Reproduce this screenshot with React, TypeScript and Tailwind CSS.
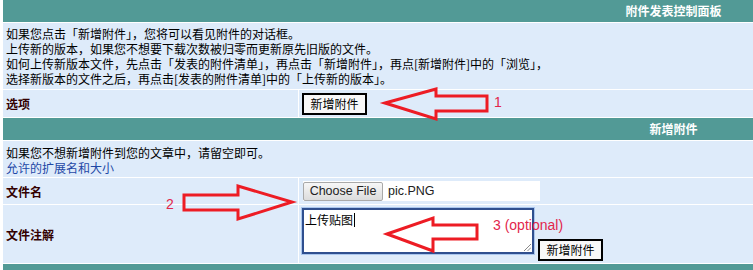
import React from "react";

const TEAL = "bg-[#529a96]";

function AddButton() {
  return (
    <div className="w-[65px] h-[22px] border-2 border-black bg-[#f8f8f8] flex items-center justify-center text-[12px] leading-none text-black">
      新增附件
    </div>
  );
}

export default function App() {
  return (
    <div className="relative w-[753px] h-[270px] overflow-hidden bg-white pl-[3px] font-['Noto_Sans_CJK_SC',sans-serif] text-[12px] leading-[15px] text-black">
      <div className="flex flex-col gap-px h-full">
        {/* header */}
        <div className={`h-[22px] ${TEAL} flex justify-end shrink-0`}>
          <div className="w-[159px] text-center font-bold text-white leading-[22px]">附件发表控制面板</div>
        </div>
        {/* info block */}
        <div className="h-[66px] bg-[#deebfa] pt-[3px] pl-[3px] shrink-0">
          <div>如果您点击「新增附件」，您将可以看见附件的对话框。</div>
          <div>上传新的版本，如果您不想要下载次数被归零而更新原先旧版的文件。</div>
          <div>如何上传新版本文件，先点击「发表的附件清单」，再点击「新增附件」，再点[新增附件]中的「浏览」，</div>
          <div>选择新版本的文件之后，再点击[发表的附件清单]中的「上传新的版本」。</div>
        </div>
        {/* options row */}
        <div className="h-[27px] flex gap-px shrink-0">
          <div className="w-[295px] bg-[#deebfa] flex items-center pl-[3px] font-bold text-[#330000]">选项</div>
          <div className="flex-1 bg-[#deebfa] pl-[3px] pt-[3px]">
            <AddButton />
          </div>
        </div>
        {/* second header */}
        <div className={`h-[22px] ${TEAL} flex justify-end shrink-0`}>
          <div className="w-[159px] text-center font-bold text-white leading-[22px]">新增附件</div>
        </div>
        {/* info block 2 */}
        <div className="h-[36px] bg-[#deebfa] pt-[4px] pl-[3px] shrink-0">
          <div>如果您不想新增附件到您的文章中，请留空即可。</div>
          <div className="text-[#1f48a6]">允许的扩展名和大小</div>
        </div>
        {/* file name row */}
        <div className="h-[26px] flex gap-px shrink-0">
          <div className="w-[295px] bg-[#deebfa] flex items-center pl-[3px] font-bold text-[#330000]">文件名</div>
          <div className="flex-1 bg-[#deebfa] pl-[4px] pt-[3px]">
            <div className="w-[237px] h-[20px] bg-white flex items-center font-['Liberation_Sans',Arial,sans-serif] text-[12.5px] leading-none">
              <div className="w-[80px] h-[19px] border border-[#a9a9a9] rounded-[2px] bg-gradient-to-b from-[#f7f7f7] to-[#dcdcdc] flex items-center justify-center text-[#222]">
                Choose File
              </div>
              <span className="pl-[5px] text-[#222]">pic.PNG</span>
            </div>
          </div>
        </div>
        {/* note row */}
        <div className="h-[58px] flex gap-px shrink-0">
          <div className="w-[295px] bg-[#deebfa] flex items-center pl-[3px] font-bold text-[#330000]">文件注解</div>
          <div className="flex-1 bg-[#deebfa] pl-[3px] pt-[3px] flex items-start gap-[4px]">
            <div className="relative w-[232px] h-[46px] bg-white border-2 border-[#2f4f8f] shadow-[0_0_0_1px_#a9c6ee] pl-[1px] pt-[2px]">
              <span className="inline-flex items-center">
                上传贴图
                <span className="inline-block w-px h-[14px] bg-black ml-[1px]" />
              </span>
              <svg className="absolute right-[1px] bottom-[1px]" width="8" height="8" viewBox="0 0 8 8">
                <line x1="1" y1="8" x2="8" y2="1" stroke="#888" strokeWidth="1" />
                <line x1="4.5" y1="8" x2="8" y2="4.5" stroke="#888" strokeWidth="1" />
              </svg>
            </div>
            <div className="mt-[31px]">
              <AddButton />
            </div>
          </div>
        </div>
        {/* footer */}
        <div className={`flex-1 ${TEAL}`} />
      </div>

      {/* annotation overlay */}
      <svg className="absolute inset-0 pointer-events-none" width="753" height="270" viewBox="0 0 753 270">
        <g fill="none" stroke="#ed1c24" strokeWidth="3" strokeLinejoin="miter">
          <polygon points="385,103 436,89 436,96 487,96 487,111 436,111 436,119" />
          <polygon points="184,195 238,195 238,186 292,202 238,219 238,210 184,210" />
          <polygon points="387,234 433,218 433,225 477,225 477,239 433,239 433,251" />
        </g>
        <g fill="#e2264c" fontFamily="'Liberation Sans', Arial, sans-serif" fontSize="14">
          <text x="494" y="107">1</text>
          <text x="166" y="209">2</text>
          <text x="493" y="230">3 (optional)</text>
        </g>
      </svg>
    </div>
  );
}
